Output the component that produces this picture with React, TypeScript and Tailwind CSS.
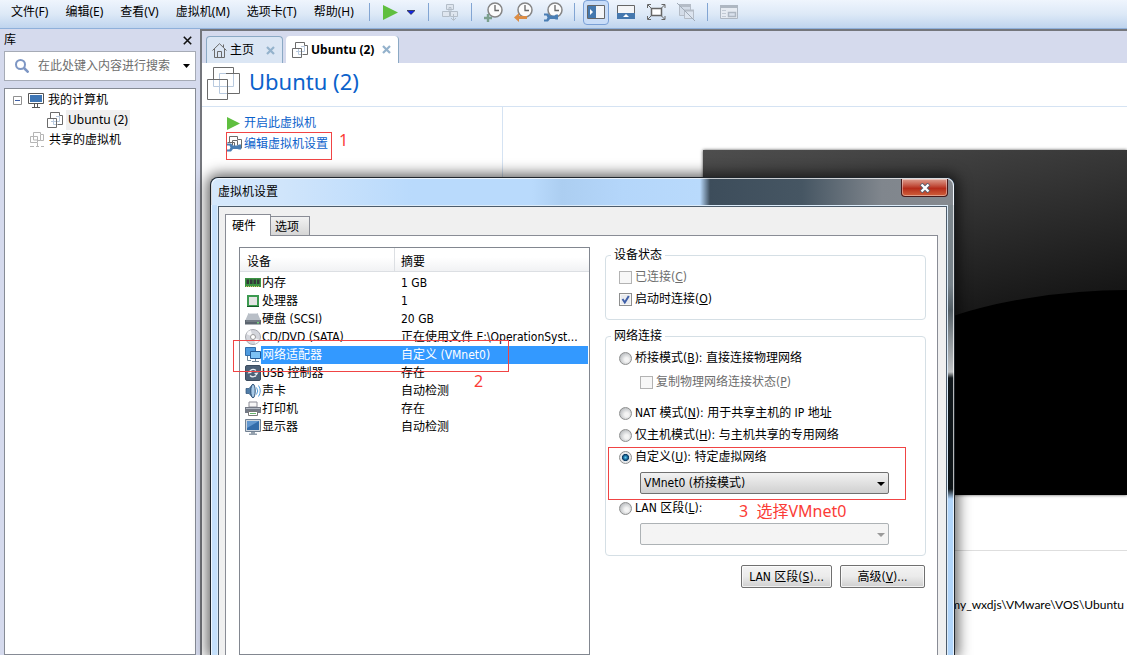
import type { ReactNode } from "react";

const menus = ["文件(F)", "编辑(E)", "查看(V)", "虚拟机(M)", "选项卡(T)", "帮助(H)"];

function VmIcon({ size = 16, stroke = "#6b6b6b", light = "#b9cadf" }) {
  if (size > 20) {
    return (
      <svg width={size} height={size} viewBox="0 0 33 33" fill="none" className="shrink-0">
        <path d="M6.5 13v6.5h20V6.5M12.5 13v13.5h8M12.5 12V6.5h7" stroke={light} />
        <path d="M6.5 12.5V.5h20v6h6v20h-12M19 6.5h8M.5 12.5h20v20H.5z" stroke={stroke} />
      </svg>
    );
  }
  return (
    <svg width={size} height={size} viewBox="0 0 16 16" fill="none" className="shrink-0">
      <path d="M4 9.5h8.5V4M6.5 7v5.5H10M9 4.5h3" stroke={light} />
      <path d="M3.5 6V.5h9v3h3v9h-5M.5 6.5h9v9h-9z" stroke={stroke} />
    </svg>
  );
}

function PlayIcon({ size = 14 }) {
  return (
    <svg width={size} height={size} viewBox="0 0 14 16" preserveAspectRatio="none" className="shrink-0">
      <path d="M0 0l14 8-14 8z" fill="#5fbf3f" />
    </svg>
  );
}

function Wrench() {
  return <path d="M1 11.5h4l2 2h4.500l1.500-1h2v5h-2l-1.500-.5H7l-2 2.500H1v-2h2.500l1-2-1-2H1z" fill="#4a7eb4" />;
}

function Clock({ children }: { children: ReactNode }) {
  return (
    <svg width="20" height="20" viewBox="0 0 20 20" fill="none">
      <circle cx="12" cy="8" r="7" fill="#fbfbfb" stroke="#858585" strokeWidth="1.5" />
      <path d="M12 3v5.500h4" stroke="#666" strokeWidth="1.300" />
      {children}
    </svg>
  );
}

function Sep() {
  return <div className="mx-[11px] h-[18px] w-px shrink-0 bg-[#82a5d3]" />;
}

function Toolbar() {
  return (
    <header className="flex h-[29px] shrink-0 items-start border-b border-b-[#8fb0da] bg-linear-to-b from-[#eff5fd] via-[#dde9f7] to-[#bfd4ee]">
      <nav className="flex h-6 items-center gap-[17px] pr-1 pl-[11px]">
        {menus.map((m) => (
          <button key={m} className="whitespace-nowrap">{m}</button>
        ))}
      </nav>
      <div className="flex h-6 items-center">
        <Sep />
        <button aria-label="开机" className="flex w-5 justify-center"><PlayIcon size={15} /></button>
        <button aria-label="电源选项" className="ml-[5px] flex w-[11px] justify-center">
          <svg width="8" height="5" viewBox="0 0 8 5"><path d="M0 .5h8L4 4.500z" fill="#1428e8" stroke="#111" strokeWidth=".6" /></svg>
        </button>
        <Sep />
        <button aria-label="发送">
          <svg width="20" height="20" viewBox="0 0 20 20" fill="#dfe6ef" stroke="#b4bec9">
            <path d="M6.5 2.500h7v5h-7zM2.500 9.500h7v5h-7zM10.500 9.500h7v5h-7zM9 5.500h2v4H9z" />
            <path d="M13.500 12v6M11 16l2.500 2.500L16 16" fill="none" />
          </svg>
        </button>
        <Sep />
        <div className="flex gap-2.5">
          <button aria-label="拍摄快照"><Clock><path d="M5 12v8M1 16h8" stroke="#7ba08e" strokeWidth="2.400" /></Clock></button>
          <button aria-label="恢复快照"><Clock><path d="M1 15.500l5-4.500v3h8v3H6v3z" fill="#dc8d45" /></Clock></button>
          <button aria-label="管理快照"><Clock><Wrench /></Clock></button>
        </div>
        <Sep />
        <div className="-ml-[3px] flex items-center gap-2.5">
          <button aria-label="显示库" className="-mr-[3px] flex h-[25px] w-[26px] items-center justify-center rounded-sm border border-[#7aa0d6] bg-[#c9ddf8]">
            <svg width="18" height="14" viewBox="0 0 18 14" className="shrink-0">
              <path d="M.5.5h17v13H.5z" fill="#f4f5f7" stroke="#666" />
              <path d="M1 1h8v12H1z" fill="#4578ae" />
              <path d="M3 4l3 3-3 3z" fill="#fff" />
            </svg>
          </button>
          <button aria-label="显示缩略图栏" className="flex w-5 justify-center">
            <svg width="18" height="14" viewBox="0 0 18 14">
              <path d="M.5.5h17v13H.5z" fill="#f4f5f7" stroke="#666" />
              <path d="M0 8h18v6H0z" fill="#4578ae" />
              <path d="M6 12l3-3 3 3z" fill="#fff" />
            </svg>
          </button>
          <button aria-label="全屏">
            <svg width="20" height="20" viewBox="0 0 20 20" fill="none" stroke="#666">
              <path d="M5.500 6.500h10v7h-10z" fill="#fff" strokeWidth="1.500" />
              <path d="M1.500 6V2.500H5M15.500 2.500h3.500V6M19 14v3.500h-3.500M5 17.500H1.500V14M2 3l3 3M18.500 3l-3 3M18.500 17l-3-3M2 17l3-3" />
            </svg>
          </button>
          <button aria-label="Unity">
            <svg width="20" height="20" viewBox="0 0 20 20" fill="none" stroke="#b4bcc7">
              <path d="M3.500 4.500h11v9h-11z" fill="#d3dce8" /><path d="M3 3.500h12" strokeWidth="3" />
              <path d="M8.500 8.500h9v8h-9z" fill="#dce4ef" /><path d="M8 8.500h10" strokeWidth="2" /><path d="M1 1l18 18" stroke="#9faab6" />
            </svg>
          </button>
        </div>
        <Sep />
        <button aria-label="控制台视图">
          <svg width="20" height="20" viewBox="0 0 20 20" fill="none" stroke="#aeb7c2">
            <path d="M1.500 3.500h17v13h-17z" fill="#e6ebf2" /><path d="M1 4.500h18" strokeWidth="3" />
            <path d="M3 8.500h4M3 11.500h4M3 14.500h4" stroke="#c2cad4" /><path d="M9.500 10.500h7v4h-7z" fill="#d9e1ec" strokeWidth="1.500" />
          </svg>
        </button>
      </div>
    </header>
  );
}

function Sidebar() {
  return (
    <aside className="flex w-[200px] shrink-0 flex-col bg-[#d5daed] px-1">
      <div className="flex h-[22px] items-center justify-between pr-1">
        <span>库</span>
        <button aria-label="关闭">
          <svg width="9" height="9" viewBox="0 0 9 9" stroke="#111" strokeWidth="1.600"><path d="M.8.8l7.400 7.400M8.200.8L.8 8.200" /></svg>
        </button>
      </div>
      <div className="flex h-[30px] items-center border border-[#a6abb6] bg-white pr-[5px] pl-2.5">
        <svg width="14" height="14" viewBox="0 0 14 14" fill="none" stroke="#7d96c4" strokeWidth="2" className="shrink-0">
          <circle cx="5.500" cy="5.500" r="4.500" /><path d="M9 9l4.500 4.500" strokeWidth="2.500" />
        </svg>
        <input aria-label="搜索" placeholder="在此处键入内容进行搜索" className="ml-[9px] min-w-0 flex-1 outline-none placeholder:text-[#6d6d6d]" />
        <svg width="7" height="4" viewBox="0 0 7 4" className="shrink-0"><path d="M0 0h7L3.500 4z" /></svg>
      </div>
      <div className="mt-[7px] flex-1 border border-[#868b95] bg-white pt-px leading-5">
        <div className="flex items-center pl-2">
          <svg width="9" height="9" viewBox="0 0 9 9" fill="none"><path d="M.5.5h8v8h-8z" stroke="#919191" /><path d="M2 4.500h5" stroke="#3f5fa5" /></svg>
          <svg width="16" height="15" viewBox="0 0 16 15" className="mr-1 ml-1.5 shrink-0">
            <path d="M.5.5h15v10H.5z" fill="#fff" stroke="#555" /><path d="M2 2h12v7H2z" fill="#3f76b5" /><path d="M6.500 11v3M9.500 11v3M4 14.500h8" stroke="#555" />
          </svg>
          我的计算机
        </div>
        <div className="flex items-center pl-[42px]">
          <VmIcon />
          <span className="ml-[3px] bg-[#efefef] px-0.5">Ubuntu (2)</span>
        </div>
        <div className="flex items-center gap-[5px] pl-[25px]">
          <svg width="14" height="16" viewBox="0 0 14 16" fill="none" stroke="#b5b5b5">
            <path d="M3.500 4V.5h7v2h3v6h-3M.5 4.500h7v6h-7zM10.500 3v5.500H8M3.500 5v3h4" /><path d="M0 14.500h4M6 14.500h3M11 14.500h3M7.500 11v3" />
          </svg>
          共享的虚拟机
        </div>
      </div>
    </aside>
  );
}

function TabClose() {
  return <svg width="9" height="9" viewBox="0 0 9 9" stroke="#94b2cc" strokeWidth="2.200"><path d="M1 1l7 7M8 1L1 8" /></svg>;
}

function Workspace() {
  return (
    <main className="flex min-w-0 flex-1 flex-col border-t-2 border-l-2 border-[#74767c] bg-white">
      <div className="flex h-8 shrink-0 items-end gap-[3px] bg-[#d5daed] pl-[4px]">
        <div className="flex h-[27px] w-[77px] items-center rounded-t border border-b-0 border-[#8ba9c4] bg-[#dbe6f4] pl-[5px]">
          <svg width="15" height="15" viewBox="0 0 15 15" fill="none" stroke="#6b6b6b"><path d="M.5 7.500l7-6.800 7 6.800M2.500 6v8.500h10V6M5.500 14V8.500h4V14M11.500 4V1.500" /></svg>
          <span className="ml-[3px] flex-1 whitespace-nowrap">主页</span>
          <button aria-label="关闭主页" className="mr-[7px]"><TabClose /></button>
        </div>
        <div className="flex h-[27px] w-[113px] items-center rounded-t border-r border-[#8ba9c4] bg-white pl-[6px]">
          <VmIcon />
          <span className="ml-[3px] flex-1 font-bold whitespace-nowrap">Ubuntu (2)</span>
          <button aria-label="关闭 Ubuntu (2)" className="mr-[7px]"><TabClose /></button>
        </div>
      </div>
      <h1 className="flex h-[44px] shrink-0 items-center gap-[9px] border-b border-[#d5e3f3] pb-0.5 pl-[5px] text-[22px] text-[#0b62cb]">
        <VmIcon size={33} />
        <span className="-mt-1">Ubuntu (2)</span>
      </h1>
      <div className="flex min-h-0 flex-1">
        <div className="flex w-[301px] shrink-0 flex-col items-start gap-[3px] border-r border-[#d5e3f3] pt-[7px] pl-[25px] text-[#0b62cb]">
          <a href="#power" className="flex h-[18px] items-center gap-1"><PlayIcon size={13} />开启此虚拟机</a>
          <a href="#settings" className="flex h-[18px] items-center gap-0.5">
            <svg width="15" height="16" viewBox="0 0 15 16" fill="none" stroke="#6b6b6b">
              <path d="M2.500 6V.5h8v3h4v9M5.500 9V4.500h5v5M.5 6.500h7v5" /><g transform="translate(-1 -4)" stroke="none"><Wrench /></g>
            </svg>
            编辑虚拟机设置
          </a>
        </div>
        <div className="min-w-0 flex-1 pt-[43px]">
          <div className="ml-[200px] h-[345px] overflow-hidden bg-[linear-gradient(168deg,#4e4e4e_0,#131313_55%)] shadow-[0_0_3px_#555]">
            <svg width="100%" height="345" className="block"><ellipse cx="430" cy="247" rx="275" ry="107" fill="#000" /><path d="M155 247h2000v98H155z" /></svg>
          </div>
          <div className="mt-[55px] border-t border-[#dedede]" />
          <p className="mt-[46px] pr-[3px] text-right font-[Lato,'Noto_Sans',sans-serif]">my_wxdjs\VMware\VOS\Ubuntu</p>
        </div>
      </div>
    </main>
  );
}

const art: Record<string, ReactNode> = {
  memory: <><path d="M0 3h16v9H0z" fill="#3b9342" /><path d="M1.500 4.500H4v4.500H1.500zM5 4.500h2.500V9H5zM8.500 4.500H11V9H8.500zM12 4.500h2.500V9H12z" fill="#333b38" /><path d="M1 11.500h14" stroke="#d7c66e" strokeDasharray="1 1" /></>,
  cpu: <><path d="M2 2h12v12H2z" fill="#3c9a50" /><path d="M4 4h8v8H4z" fill="#e4e5e4" /><path d="M2 13.500h12" stroke="#145a27" /></>,
  disk: <><path d="M3.500 2h9L16 10H0z" fill="#b9bfc7" /><path d="M4 2.500h8" stroke="#e0e3e7" /><path d="M0 9h16v4.500H0z" fill="#5c656f" /><path d="M1 10h14" stroke="#8b939c" /><path d="M12 11h2v1.500h-2z" fill="#75d07c" /></>,
  cd: <><circle cx="8" cy="8" r="7.500" fill="#d4d6dc" stroke="#a5a7ad" /><path d="M8 8L1.500 5a8 8 0 0 1 4-4zM8 8l6.500 3a8 8 0 0 1-4 4z" fill="#f6f6f8" /><circle cx="8" cy="8" r="2.500" fill="#fff" stroke="#999" /></>,
  net: <><path d="M.5.5h10v8H.5z" fill="#4e9ade" stroke="#326da9" /><path d="M5.500 4.500h10v7h-10z" fill="#7dc1f4" stroke="#245b97" /><path d="M2.500 9v4.500H6M10.500 12v2M7 14.500h7" stroke="#6f8497" fill="none" /></>,
  usb: <><rect x=".5" y=".5" width="15" height="15" rx="1.500" fill="#4d6177" stroke="#3b4c5f" /><path d="M11 5.500A4 4 0 0 0 5 6M5 10.500a4 4 0 0 0 6 0" fill="none" stroke="#e8edf2" strokeWidth="1.200" /><path d="M2.500 8.500l2-3 2.500 2.500zM13.500 7.500l-2 3L9 8z" fill="#e8edf2" /></>,
  sound: <><path d="M1 5.500h3L8 1v14l-4-4.500H1z" fill="#507da8" stroke="#2e5277" strokeWidth=".7" /><ellipse cx="8" cy="8" rx="2.200" ry="6.800" fill="#a9cbe8" stroke="#2e5277" /><path d="M11.500 4.500q2.500 3.500 0 7M13.500 2.500q3.500 5.500 0 11" stroke="#4f9ddd" fill="none" /></>,
  printer: <><path d="M4 1h8v5H4z" fill="#f7f7f7" stroke="#8e8e98" /><path d="M0 6h16v6H0z" fill="#747a86" /><path d="M1 7.500h14" stroke="#b4bac4" /><path d="M3.500 10.500h9v4h-9z" fill="#fff" stroke="#777" /><path d="M5 12.500h6" stroke="#69b66d" /></>,
  display: <><path d="M.5.5h15v12H.5z" fill="#cfd6de" stroke="#738293" /><path d="M2 2h12v9H2z" fill="#346caa" /><path d="M2 2h12L2 9z" fill="#6297cf" /><path d="M6 13h4v1.500H6zM4 14.500h8v1.500H4z" fill="#94a0ad" /></>,
};

const devices = [
  { icon: "memory", name: "内存", summary: "1 GB" },
  { icon: "cpu", name: "处理器", summary: "1" },
  { icon: "disk", name: "硬盘 (SCSI)", summary: "20 GB" },
  { icon: "cd", name: "CD/DVD (SATA)", summary: "正在使用文件 E:\\OperationSyst..." },
  { icon: "net", name: "网络适配器", summary: "自定义 (VMnet0)", selected: true },
  { icon: "usb", name: "USB 控制器", summary: "存在" },
  { icon: "sound", name: "声卡", summary: "自动检测" },
  { icon: "printer", name: "打印机", summary: "存在" },
  { icon: "display", name: "显示器", summary: "自动检测" },
];

function DeviceTable() {
  return (
    <div className="w-[351px] shrink-0 border border-[#828790]">
      <table className="w-full table-fixed border-collapse text-left">
        <thead>
          <tr className="h-[26px] align-top">
            <th className="w-[155px] p-0 font-normal"><div className="h-6 border-r border-b border-[#dcdfe3] bg-linear-to-b from-white from-40% to-[#f1f2f4] pl-[7px] leading-[29px]">设备</div></th>
            <th className="p-0 font-normal"><div className="h-6 border-b border-[#dcdfe3] bg-linear-to-b from-white from-40% to-[#f1f2f4] pl-[6px] leading-[29px]">摘要</div></th>
          </tr>
        </thead>
        <tbody>
          {devices.map((d) => (
            <tr key={d.name} className={d.selected ? "h-[18px] text-white" : "h-[18px]"}>
              <td className="p-0">
                <div className="flex h-[18px] items-center pl-[5px]">
                  <svg width="16" height="16" viewBox="0 0 16 16" className="shrink-0">{art[d.icon]}</svg>
                  <span className={`h-[18px] flex-1 pl-px leading-[18px] whitespace-nowrap ${d.selected ? "bg-[#3399ff]" : ""}`}>{d.name}</span>
                </div>
              </td>
              <td className="p-0 pr-px">
                <div className={`h-[18px] truncate pl-[6px] leading-[18px] ${d.selected ? "bg-[#3399ff]" : ""}`}>{d.summary}</div>
              </td>
            </tr>
          ))}
        </tbody>
      </table>
    </div>
  );
}

type OptionProps = { text: string; hotkey: string; rest?: string; radio?: boolean; checked?: boolean; disabled?: boolean };

function Option({ text, hotkey, rest = "", radio, checked, disabled }: OptionProps) {
  return (
    <label className={`flex h-[22px] items-center gap-[3px] whitespace-nowrap ${disabled ? "text-[#6d6d6d]" : ""}`}>
      <span className="relative flex size-[13px] shrink-0">
        {radio ? (
          <input type="radio" name="network" defaultChecked={checked} className="size-[13px] appearance-none rounded-full border border-[#8e8f8f] bg-[radial-gradient(circle_at_60%_60%,#f4f4f4_20%,#bcbfc2_75%)] checked:bg-[radial-gradient(circle,#5fd0f4_0,#145a8c_30%,#0f3a5e_42%,#e6e8ea_50%)]" />
        ) : (
          <input type="checkbox" defaultChecked={checked} disabled={disabled} className="size-[13px] appearance-none border border-[#8e8f8f] bg-[#e9ebee] inset-ring-1 inset-ring-[#f7f7f7] disabled:border-[#b3b3b3] disabled:bg-[#f7f7f7]" />
        )}
        {checked && !radio && (
          <svg width="13" height="13" viewBox="0 0 13 13" fill="none" className="pointer-events-none absolute inset-0"><path d="M3.500 6l2.300 3.500L9.800 3" stroke="#3f5fa8" strokeWidth="2" /></svg>
        )}
      </span>
      <span>{text}(<u>{hotkey}</u>){rest}</span>
    </label>
  );
}

function Combo({ label, value, disabled }: { label: string; value: string; disabled?: boolean }) {
  return (
    <div className="relative mr-[31px] ml-[21px]">
      <select aria-label={label} disabled={disabled} className="block h-[22px] w-full appearance-none rounded-xs border border-[#707070] bg-linear-to-b from-[#f2f2f2] to-[#d0d0d0] pl-[3px] disabled:border-[#adb2b5] disabled:from-[#f4f4f4] disabled:to-[#f4f4f4]">
        <option>{value}</option>
      </select>
      <svg width="8" height="4" viewBox="0 0 8 4" className="pointer-events-none absolute top-[10px] right-1" fill={disabled ? "#9a9a9a" : "#000"}><path d="M0 0h8L4 4z" /></svg>
    </div>
  );
}

const btn = "h-[23px] rounded-xs border border-[#707070] bg-linear-to-b from-[#f3f3f3] via-[#ebebeb] to-[#cfcfcf] inset-ring-1 inset-ring-white/70";

function SettingsDialog() {
  return (
    <section role="dialog" aria-label="虚拟机设置" className="absolute top-[177px] bottom-0 left-[210px] z-10 flex w-[745px] flex-col overflow-hidden rounded-t-lg border border-b-0 border-[#20262c] bg-[#b6d9fb] font-['DejaVu_Sans_Condensed','DejaVu_Sans','Noto_Sans_CJK_SC',sans-serif] shadow-[0_0_14px_3px_#000000a0]">
      <div className="flex h-[27px] shrink-0 items-start justify-between rounded-t-lg border border-b-0 border-white/70 bg-[linear-gradient(90deg,#d5e8fb_0,#d0e5fb_70px,#b9dafc_200px,#b9dafc_320px,#accef1_350px,#b4d6fa_410px,#b9dafc_488px,#3d4d5b_498px,#465663_590px,#80868d_670px,#858a90_100%)]">
        <h2 className="pl-[6px] leading-[26px]">虚拟机设置</h2>
        <button aria-label="关闭" className="mr-[5px] flex h-[18px] w-[47px] items-center justify-center rounded-b-sm border border-t-0 border-[#45191a] bg-linear-to-b from-[#dc9d8f] via-[#b52b1a] via-55% to-[#d0603b] inset-ring-1 inset-ring-white/40">
          <svg width="12" height="10" viewBox="0 0 12 10"><path d="M2 1l8 8M10 1L2 9" stroke="#555d6d" strokeWidth="4" /><path d="M2.500 1.500l7 7M9.500 1.500l-7 7" stroke="#fff" strokeWidth="2.400" /></svg>
        </button>
      </div>
      <div className="flex min-h-0 flex-1">
        <div className="w-[6px] shrink-0 border-l border-white/70 bg-[#c5e0fb]" />
        <div className="flex min-w-0 flex-1 flex-col border border-b-0 border-[#dcecfa]">
          <div className="flex flex-1 flex-col border border-b-0 border-[#4d5c6b] bg-[#f0f0f0] pt-[7px] pr-2 pl-[6px]">
            <div className="flex items-end" role="tablist">
              <button role="tab" aria-selected="true" className="z-10 -mb-px h-[22px] w-[46px] border border-b-0 border-[#898c95] bg-white pr-2">硬件</button>
              <button role="tab" aria-selected="false" className="-ml-px h-[19px] w-10 border border-b-0 border-[#898c95] bg-linear-to-b from-[#f2f2f2] to-[#d6d6d6] pt-0.5 pr-1.5">选项</button>
            </div>
            <div className="flex flex-1 gap-[15px] border border-b-0 border-[#898c95] bg-white pt-[11px] pr-[11px] pl-[13px]">
              <DeviceTable />
              <div className="-mt-px min-w-0 flex-1">
                <fieldset className="rounded border border-[#d5dfe5] px-[5px] pb-[9px]">
                  <legend className="px-[3px] leading-[18px]">设备状态</legend>
                  <div className="pt-0.5 pl-2">
                    <Option text="已连接" hotkey="C" disabled />
                    <Option text="启动时连接" hotkey="O" checked />
                  </div>
                </fieldset>
                <fieldset className="mt-[7px] rounded border border-[#d5dfe5] px-[5px] pb-[10px]">
                  <legend className="px-[3px] leading-[18px]">网络连接</legend>
                  <div className="pt-0.5 pl-2">
                    <Option radio text="桥接模式" hotkey="B" rest=": 直接连接物理网络" />
                    <div className="mt-0.5 mb-[9px] ml-[21px]"><Option text="复制物理网络连接状态" hotkey="P" disabled /></div>
                    <Option radio text="NAT 模式" hotkey="N" rest=": 用于共享主机的 IP 地址" />
                    <Option radio text="仅主机模式" hotkey="H" rest=": 与主机共享的专用网络" />
                    <Option radio text="自定义" hotkey="U" rest=": 特定虚拟网络" checked />
                    <div className="mt-1 mb-[3px]"><Combo label="特定虚拟网络" value="VMnet0 (桥接模式)" /></div>
                    <Option radio text="LAN 区段" hotkey="L" rest=":" />
                    <div className="mt-1"><Combo label="LAN 区段" value="" disabled /></div>
                  </div>
                </fieldset>
                <div className="mt-[9px] flex justify-end gap-2 pr-px">
                  <button className={`${btn} w-[91px]`}>LAN 区段(<u>S</u>)...</button>
                  <button className={`${btn} w-[85px]`}>高级(<u>V</u>)...</button>
                </div>
              </div>
            </div>
          </div>
        </div>
        <div className="w-[6px] shrink-0 border-r border-white/70 bg-[linear-gradient(180deg,#7d878d_0,#77828a_80px,#545f66_105px,#8d9498_135px,#c0c3c5_167px,#11181c_173px,#0d1316_284px,#b1d5fa_294px)]" />
      </div>
    </section>
  );
}

// red marks drawn over the windows
function Callouts() {
  return (
    <div className="pointer-events-none absolute inset-0 z-20 text-base leading-5 text-[#fb3b36]">
      <div className="absolute top-[132px] left-[226px] h-[28px] w-[106px] border border-[#f04444]" />
      <span className="absolute top-[130px] left-[339px]">1</span>
      <div className="absolute top-[340px] left-[233px] h-[32px] w-[276px] border border-[#f04444]" />
      <span className="absolute top-[371px] left-[474px]">2</span>
      <div className="absolute top-[447px] left-[608px] h-[53px] w-[298px] border border-[#f04444]" />
      <span className="absolute top-[501px] left-[739px] whitespace-pre">3  选择VMnet0</span>
    </div>
  );
}

export default function App() {
  return (
    <div className="relative flex h-screen flex-col overflow-hidden bg-[#d5daed] font-['Noto_Sans','Noto_Sans_CJK_SC',sans-serif] text-xs text-black">
      <Toolbar />
      <div className="flex min-h-0 flex-1">
        <Sidebar />
        <Workspace />
      </div>
      <SettingsDialog />
      <Callouts />
    </div>
  );
}
